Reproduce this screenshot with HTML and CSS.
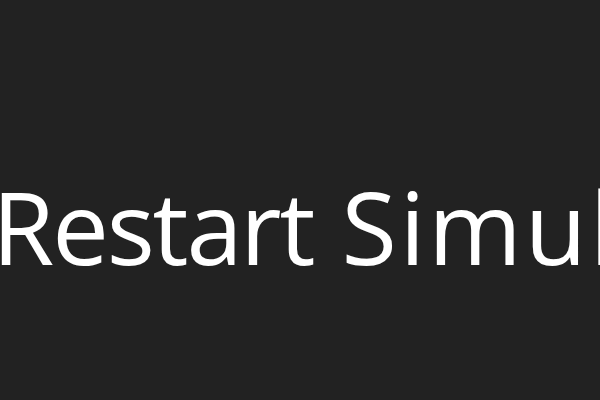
FILE: index.html
```html
<!DOCTYPE html>
<html>
<head>
<meta charset="utf-8">
<link rel="stylesheet" href="styles.css">
</head>
<body>
<div class="stage">
  <div class="label"><span class="w1">Restart</span> <span class="w2">Simulation</span></div>
</div>
</body>
</html>
```
FILE: styles.css
```css
html, body {
  margin: 0;
  padding: 0;
  background: #222222;
  overflow: hidden;
}
.stage {
  width: 600px;
  height: 400px;
  display: flex;
  align-items: center;
  overflow: hidden;
}
.label {
  font-family: "Open Sans", "Noto Sans", sans-serif;
  font-size: 101px;
  color: #ffffff;
  white-space: nowrap;
  margin-left: -8px;
  line-height: 1;
  padding-top: 52px;
  word-spacing: 2px;
}
.w1 {
  letter-spacing: -2.2px;
}
.w2 {
  letter-spacing: 3px;
}
```
